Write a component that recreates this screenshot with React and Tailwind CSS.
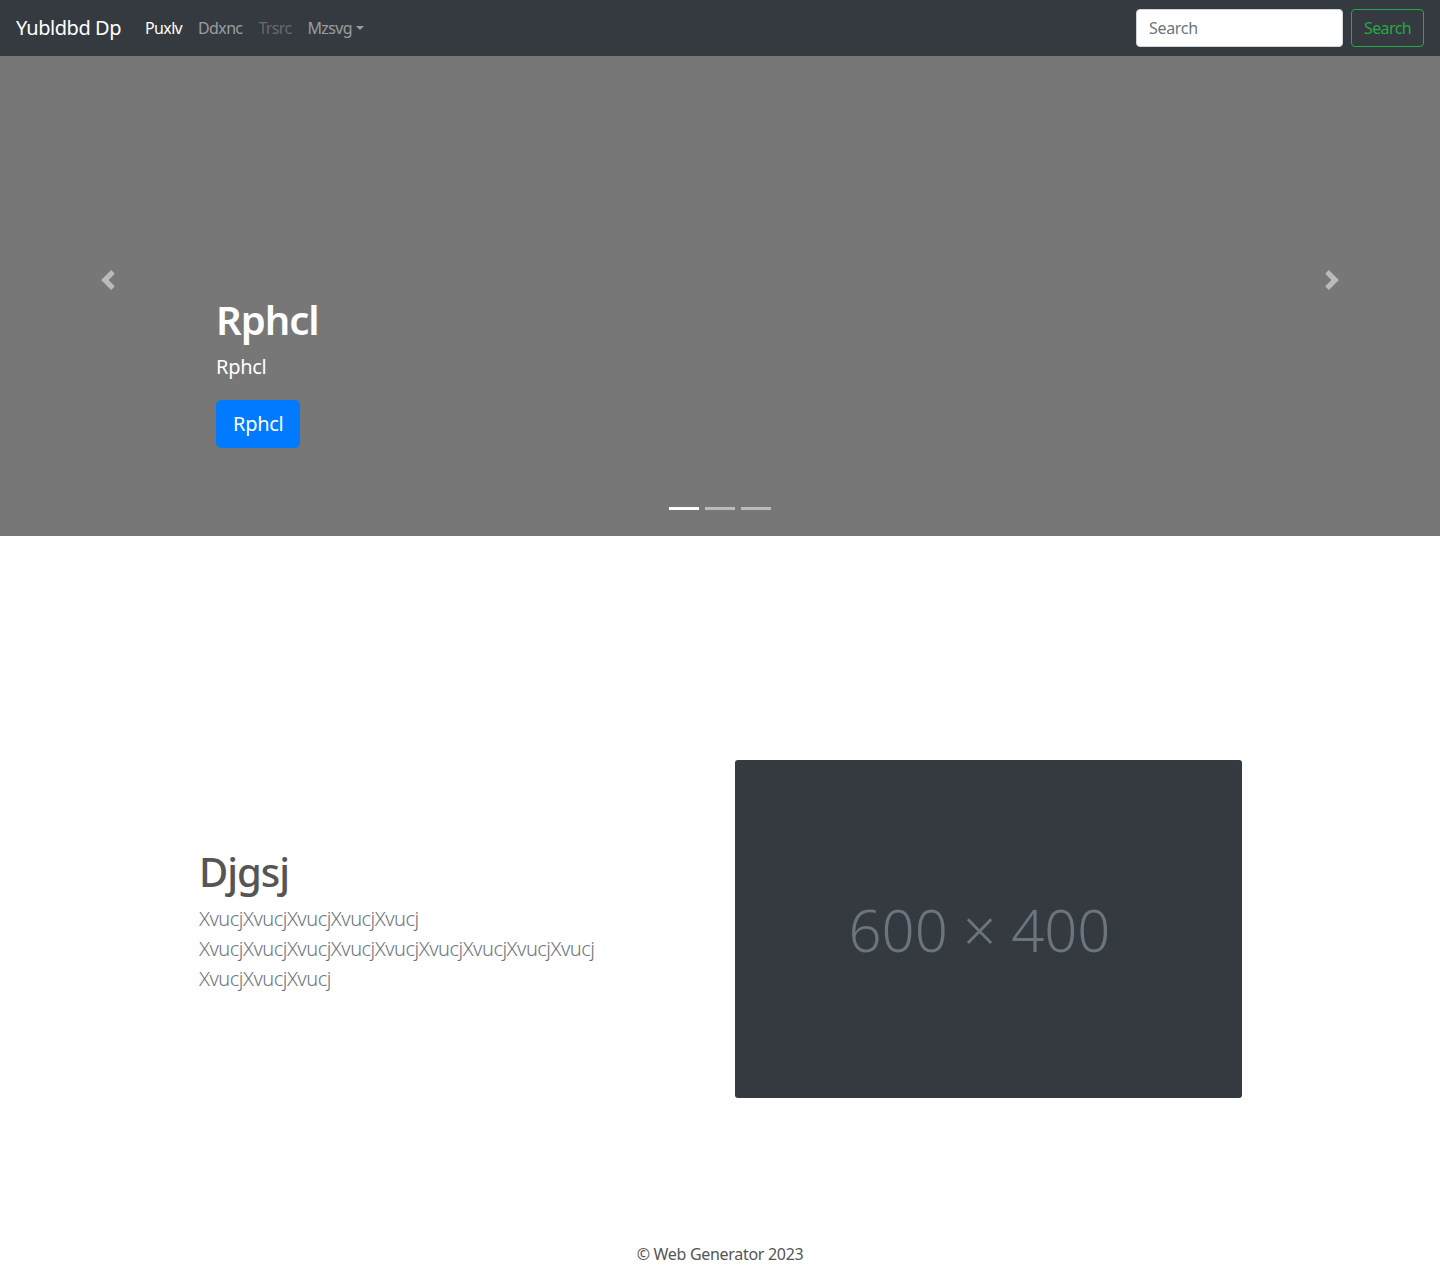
import React from "react";

function Prev() {
  return (
    <svg width="20" height="20" viewBox="0 0 8 8" fill="#fff">
      <path d="M5.25 0l-4 4 4 4 1.5-1.5L4.25 4l2.5-2.5L5.25 0z" />
    </svg>
  );
}
function Next() {
  return (
    <svg width="20" height="20" viewBox="0 0 8 8" fill="#fff">
      <path d="M2.75 0l-1.5 1.5L3.75 4l-2.5 2.5L2.75 8l4-4-4-4z" />
    </svg>
  );
}

export default function App() {
  return (
    <div className="font-['Noto_Sans',_'Open_Sans',_Arial,_sans-serif] text-[#212529] bg-white">
      {/* Navbar */}
      <nav className="h-14 bg-[#343a40] flex items-center px-4">
        <span className="text-white text-[20px] leading-[30px] mr-4 tracking-[-0.45px]">Yubldbd Dp</span>
        <ul className="flex items-center text-base leading-6 tracking-[-0.65px]">
          <li className="px-2 text-white">Puxlv</li>
          <li className="px-2 text-white/50">Ddxnc</li>
          <li className="px-2 text-white/25">Trsrc</li>
          <li className="px-2 text-white/50 flex items-center">
            Mzsvg
            <span className="ml-[4px] w-0 h-0 border-l-[4px] border-r-[4px] border-t-[4px] border-l-transparent border-r-transparent border-t-white/50"></span>
          </li>
        </ul>
        <div className="ml-auto flex items-center">
          <input
            className="w-[207px] h-[38px] rounded border border-[#ced4da] bg-white px-3 text-base text-[#495057] placeholder:text-[#6c757d] outline-none mr-2 tracking-[-0.3px]"
            placeholder="Search"
          />
          <button className="h-[38px] px-3 rounded border border-[#28a745] text-[#28a745] text-base leading-6 tracking-[-0.6px]">
            Search
          </button>
        </div>
      </nav>

      {/* Carousel */}
      <div className="relative h-[480px] bg-[#777777] overflow-hidden">
        <div className="pl-[216px] pt-[240px] text-white">
          <h1 className="text-[40px] leading-[48px] font-semibold mb-2 tracking-[-1px]">Rphcl</h1>
          <p className="text-[20px] leading-[30px] mb-[18px] tracking-[-0.3px]">Rphcl</p>
          <a className="inline-block bg-[#007bff] border border-[#007bff] text-white text-[20px] leading-[30px] px-4 py-[8px] rounded-[5px] tracking-[-0.3px]">
            Rphcl
          </a>
        </div>
        <div className="absolute left-0 top-[214px] w-[15%] flex justify-center opacity-50">
          <Prev />
        </div>
        <div className="absolute right-0 top-[214px] w-[15%] flex justify-center opacity-50">
          <Next />
        </div>
        <div className="absolute left-0 right-0 top-[451px] flex justify-center gap-[6px]">
          <span className="w-[30px] h-[3px] bg-white"></span>
          <span className="w-[30px] h-[3px] bg-white/50"></span>
          <span className="w-[30px] h-[3px] bg-white/50"></span>
        </div>
      </div>

      {/* Feature section */}
      <section className="pt-[224px] pb-[144px] pl-[199px] flex items-center">
        <div className="w-[536px] pr-[40px]">
          <h2 className="text-[40px] leading-[48px] font-medium text-[#555555] mb-2 tracking-[-1px]">Djgsj</h2>
          <p className="text-[20px] leading-[30px] font-light text-[#6c757d] mb-4 tracking-[-0.5px]">
            XvucjXvucjXvucjXvucjXvucj XvucjXvucjXvucjXvucjXvucjXvucjXvucjXvucjXvucj XvucjXvucjXvucj
          </p>
        </div>
        <div className="w-[507px] h-[338px] bg-[#343a40] rounded-[3px] flex items-center justify-center">
          <span className="text-[58px] font-light text-[#6c757d] -ml-[18px]">600 × 400</span>
        </div>
      </section>

      {/* Footer */}
      <footer className="pb-[12px] text-center text-base leading-6 text-[#555555] tracking-[-0.3px]">
        © Web Generator 2023
      </footer>
    </div>
  );
}
